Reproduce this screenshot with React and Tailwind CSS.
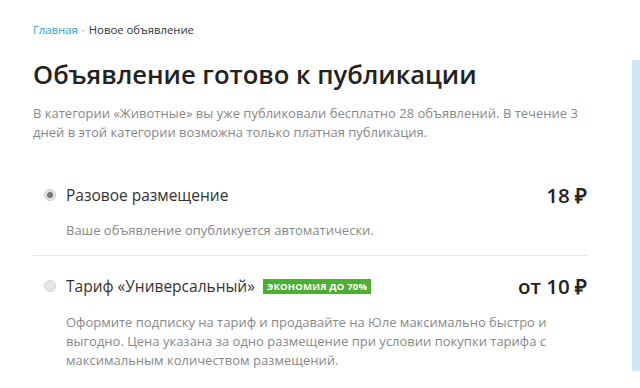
export default function App() {
  return (
    <div className="relative w-[640px] h-[388px] overflow-hidden bg-white font-['Open_Sans',sans-serif] text-[#333]">
      <div className="absolute right-0 top-[60px] w-[8px] h-[311px] bg-[#cde8fb]" />

      <div className="pl-[33px] pr-[53px] pt-[22px]">
        <div className="text-[11.3px] leading-[16px]">
          <span className="text-[#2d9fd9]">Главная</span>
          <span className="text-[#999] mx-[4px]">·</span>
          <span className="text-[#333]">Новое объявление</span>
        </div>

        <h1 className="mt-[20px] text-[25.6px] leading-[34px] font-semibold text-[#222]">
          Объявление готово к публикации
        </h1>

        <p className="mt-[12px] text-[13px] leading-[19px] text-[#888]">
          В категории «Животные» вы уже публиковали бесплатно 28 объявлений. В течение 3 дней в этой категории возможна только платная публикация.
        </p>

        <div className="mt-[40px] border-b border-[#e6e6e6] pb-[15px]">
          <div className="flex items-center">
            <span className="w-[33px] flex justify-center shrink-0">
              <span className="w-[12px] h-[12px] rounded-full bg-[#e2e2e2] border border-[#d0d0d0] flex items-center justify-center">
                <span className="w-[6px] h-[6px] rounded-full bg-[#777]" />
              </span>
            </span>
            <span className="text-[15.5px] leading-[22px]">Разовое размещение</span>
            <span className="ml-auto text-[20.5px] leading-[26px] font-semibold text-[#222]">18 ₽</span>
          </div>
          <p className="mt-[13px] pl-[33px] text-[13px] leading-[19px] text-[#888]">
            Ваше объявление опубликуется автоматически.
          </p>
        </div>

        <div className="pt-[17px]">
          <div className="flex items-center">
            <span className="w-[33px] flex justify-center shrink-0">
              <span className="w-[12px] h-[12px] rounded-full bg-[#e6e6e6] border border-[#d4d4d4]" />
            </span>
            <span className="text-[15.5px] leading-[22px]">Тариф «Универсальный»</span>
            <span className="ml-[8px] bg-[#4cae33] text-white text-[9.5px] leading-[15px] font-bold px-[4px] tracking-[0.2px]">
              ЭКОНОМИЯ ДО 70%
            </span>
            <span className="ml-auto text-[20.5px] leading-[26px] font-semibold text-[#222]">от 10 ₽</span>
          </div>
          <p className="mt-[14px] pl-[33px] text-[13px] leading-[19px] text-[#888]">
            Оформите подписку на тариф и продавайте на Юле максимально быстро и выгодно. Цена указана за одно размещение при условии покупки тарифа с максимальным количеством размещений.
          </p>
        </div>
      </div>
    </div>
  );
}
